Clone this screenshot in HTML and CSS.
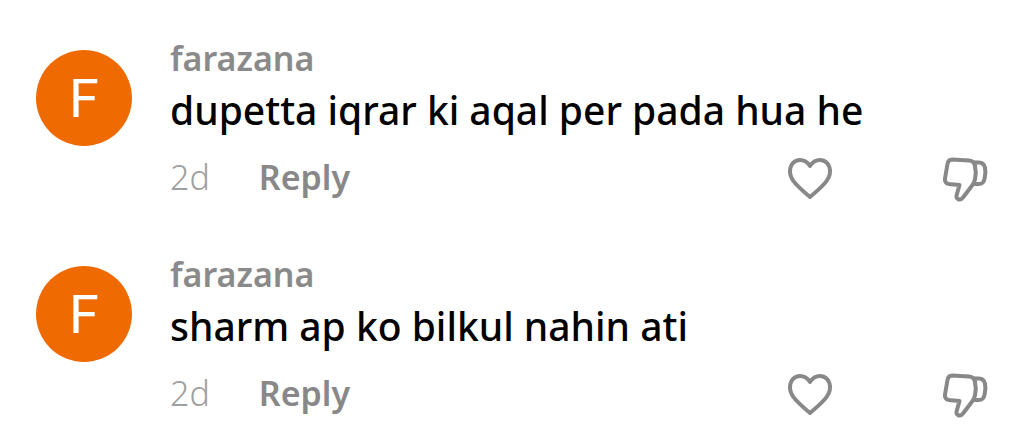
FILE: index.html
```html
<!DOCTYPE html>
<html lang="en">
<head>
<meta charset="UTF-8">
<meta name="viewport" content="width=device-width, initial-scale=1.0">
<title>Comments</title>
<link rel="stylesheet" href="styles.css">
</head>
<body>

<svg class="symbols" aria-hidden="true">
    <symbol id="heart" viewBox="0 0 48 48">
        <path d="M24 10C21.500 6 18 4 14 4C8 4 4 9 4 15.500C4 20 6 23.500 9 27C13 31.500 18 36 24 41C30 36 35 31.500 39 27C42 23.500 44 20 44 15.500C44 9 40 4 34 4C30 4 26.500 6 24 10Z"/>
    </symbol>
    <symbol id="dislike" viewBox="0 0 48 48">
        <path d="M11 3.500L28 4.500C32 4.800 33.500 6.500 34 10C35 14.500 35 19 34 23.500C33.500 26.500 32 28.500 30 31L22 41.500C20.500 43.300 18.500 44 17 43C15.300 42 15.200 40.500 15.700 39L18.500 29L8 28C5 27.600 3.500 25.500 4 22.500L6.500 8C7 5 8.500 3.500 11 3.500Z"/>
        <path d="M33 6.500H38C41.500 6.500 43 8 44 11.500C44.700 15 44.500 19 43.500 23C42.500 27 41 28 38 28H32.500"/>
    </symbol>
</svg>

<div class="comments">
    <div class="comment">
        <div class="avatar">F</div>
        <div class="content">
            <div class="name">farazana</div>
            <p class="text">dupetta iqrar ki aqal per pada hua he</p>
            <div class="actions">
                <span class="time">2d</span>
                <button type="button" class="reply">Reply</button>
                <button type="button" class="icon like" aria-label="Like"><svg><use href="#heart"/></svg></button>
                <button type="button" class="icon" aria-label="Dislike"><svg><use href="#dislike"/></svg></button>
            </div>
        </div>
    </div>
    <div class="comment">
        <div class="avatar">F</div>
        <div class="content">
            <div class="name">farazana</div>
            <p class="text">sharm ap ko bilkul nahin ati</p>
            <div class="actions">
                <span class="time">2d</span>
                <button type="button" class="reply">Reply</button>
                <button type="button" class="icon like" aria-label="Like"><svg><use href="#heart"/></svg></button>
                <button type="button" class="icon" aria-label="Dislike"><svg><use href="#dislike"/></svg></button>
            </div>
        </div>
    </div>
</div>

</body>
</html>
```
FILE: styles.css
```css
body {
    margin: 0;
    background-color: #fff;
    font-family: "Noto Sans", "Open Sans", sans-serif;
}
.symbols {
    display: none;
}
.comments {
    display: flex;
    flex-direction: column;
    gap: 48px;
    padding: 36px 35px 0 36px;
}
.comment {
    display: flex;
    gap: 38px;
}
.avatar {
    flex: none;
    width: 96px;
    height: 96px;
    margin-top: 14px;
    border-radius: 50%;
    background-color: #ef6a00;
    color: #fff;
    font-family: Roboto, sans-serif;
    font-size: 54px;
    line-height: 98px;
    text-align: center;
}
.content {
    flex: 1;
    min-width: 0;
}
.name {
    color: #8a8a8a;
    font-size: 34px;
    font-weight: 600;
    line-height: 44px;
}
.text {
    margin: 0;
    color: #000;
    font-size: 39px;
    font-weight: 500;
    line-height: 60px;
}
.actions {
    display: flex;
    align-items: flex-start;
    margin-top: 16px;
}
.time {
    color: #a0a0a0;
    font-size: 34px;
    font-weight: 300;
    line-height: 42px;
}
button {
    padding: 0;
    border: none;
    background: none;
    cursor: pointer;
}
.reply {
    margin-left: 49px;
    color: #888;
    font-family: inherit;
    font-size: 34px;
    font-weight: 600;
    line-height: 42px;
}
.icon {
    width: 48px;
    height: 48px;
}
.icon svg {
    display: block;
    width: 48px;
    height: 48px;
    fill: none;
    stroke: #888;
    stroke-width: 4;
    stroke-linejoin: round;
    stroke-linecap: round;
}
.like {
    margin-left: auto;
    margin-right: 107px;
}
```
